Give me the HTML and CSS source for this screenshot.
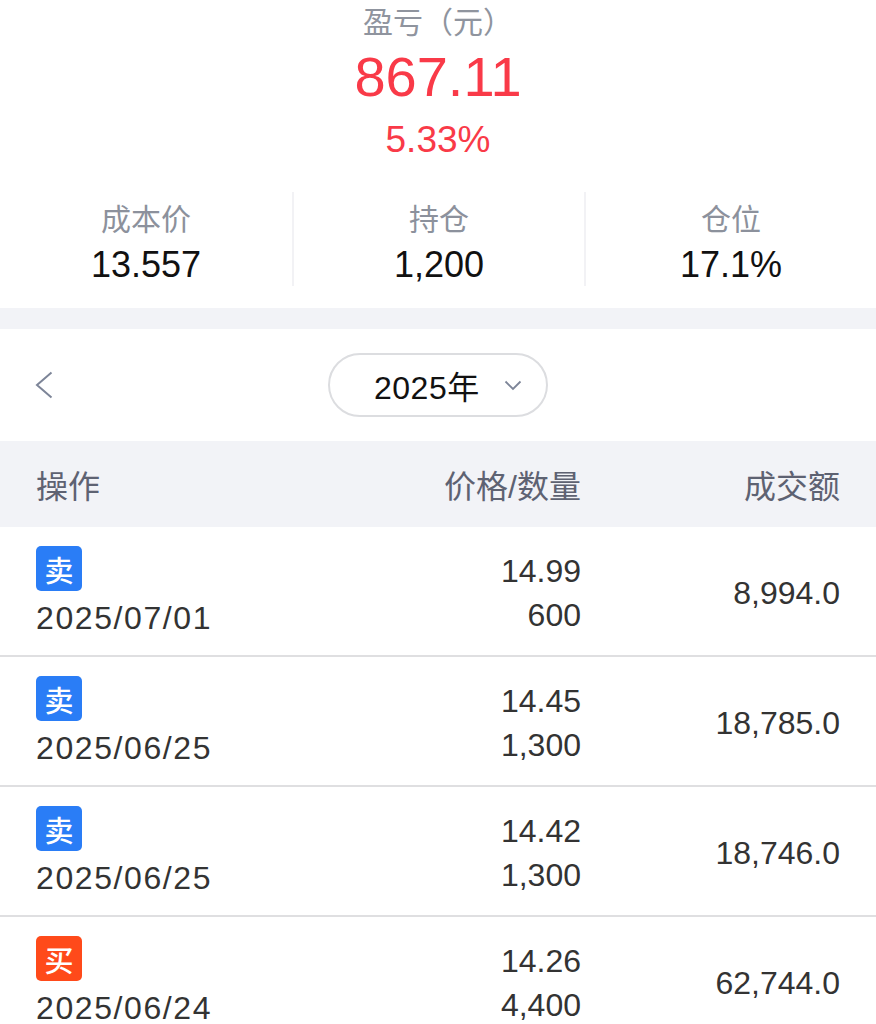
FILE: index.html
```html
<!DOCTYPE html>
<html>
	<head>
		<meta charset="UTF-8">
		<title>持仓详情</title>
		<link rel="stylesheet" href="styles.css">
	</head>
	<body>
		<div class="summary">
			<div class="pl-title">盈亏（元）</div>
			<div class="pl-value">867.11</div>
			<div class="pl-rate">5.33%</div>
		</div>
		<div class="stats">
			<div class="stat">
				<div class="stat-label">成本价</div>
				<div class="stat-value">13.557</div>
			</div>
			<div class="stat">
				<div class="stat-label">持仓</div>
				<div class="stat-value">1,200</div>
			</div>
			<div class="stat">
				<div class="stat-label">仓位</div>
				<div class="stat-value">17.1%</div>
			</div>
		</div>
		<div class="band"></div>
		<div class="year-bar">
			<div class="prev">
				<svg width="18" height="28" viewBox="0 0 18 28">
					<polyline points="16.5,1.5 2,14 16.5,26.5" fill="none" stroke="#7d8598" stroke-width="2"/>
				</svg>
			</div>
			<div class="year-pill">
				<span>2025年</span>
				<svg width="18" height="11" viewBox="0 0 18 11">
					<polyline points="1.5,1.5 9,9 16.5,1.5" fill="none" stroke="#7d8598" stroke-width="1.8"/>
				</svg>
			</div>
			<div></div>
		</div>
		<div class="table-head">
			<div>操作</div>
			<div class="num">价格/数量</div>
			<div class="num">成交额</div>
		</div>
		<div class="trade">
			<div class="op">
				<span class="tag sell">卖</span>
				<div class="date">2025/07/01</div>
			</div>
			<div class="num price">14.99<br>600</div>
			<div class="num amount">8,994.0</div>
		</div>
		<div class="trade">
			<div class="op">
				<span class="tag sell">卖</span>
				<div class="date">2025/06/25</div>
			</div>
			<div class="num price">14.45<br>1,300</div>
			<div class="num amount">18,785.0</div>
		</div>
		<div class="trade">
			<div class="op">
				<span class="tag sell">卖</span>
				<div class="date">2025/06/25</div>
			</div>
			<div class="num price">14.42<br>1,300</div>
			<div class="num amount">18,746.0</div>
		</div>
		<div class="trade">
			<div class="op">
				<span class="tag buy">买</span>
				<div class="date">2025/06/24</div>
			</div>
			<div class="num price">14.26<br>4,400</div>
			<div class="num amount">62,744.0</div>
		</div>
	</body>
</html>
```
FILE: styles.css
```css
* {
	margin: 0;
	padding: 0;
}
body {
	font-family: "Liberation Sans", "Noto Sans CJK SC", sans-serif;
	background-color: white;
	color: #333;
}
.summary {
	padding-top: 4px;
	text-align: center;
}
.pl-title {
	font-size: 30px;
	line-height: 38px;
	color: #8f949e;
}
.pl-value {
	font-size: 56px;
	line-height: 70px;
	color: #f93a48;
}
.pl-rate {
	margin-top: 3px;
	font-size: 37px;
	line-height: 50px;
	color: #f93a48;
}
.stats {
	display: grid;
	grid-template-columns: repeat(3, 1fr);
	margin-top: 27px;
	margin-bottom: 22px;
}
.stat {
	text-align: center;
	padding-top: 8px;
	border-left: 2px solid #f2f2f5;
}
.stat:first-child {
	border-left: none;
}
.stat-label {
	font-size: 30px;
	line-height: 40px;
	color: #8c919c;
}
.stat-value {
	margin-top: 3px;
	font-size: 36px;
	line-height: 43px;
	color: #111;
}
.band {
	height: 21px;
	background-color: #f2f3f7;
}
.year-bar {
	display: grid;
	grid-template-columns: 1fr auto 1fr;
	align-items: center;
	height: 112px;
}
.prev {
	padding-left: 35px;
	display: flex;
	align-items: center;
}
.year-pill {
	display: flex;
	align-items: center;
	box-sizing: border-box;
	height: 64px;
	width: 220px;
	padding: 0 24px 0 44px;
	border: 2px solid #dcdde0;
	border-radius: 32px;
	font-size: 32px;
	color: #111;
}
.year-pill span {
	letter-spacing: 0.5px;
}
.year-pill svg {
	margin-left: auto;
}
.table-head {
	display: grid;
	grid-template-columns: 1fr 200px 259px;
	align-items: center;
	height: 86px;
	padding: 0 36px;
	background-color: #f2f3f7;
	font-size: 32px;
	color: #5e6272;
}
.num {
	text-align: right;
}
.trade {
	display: grid;
	grid-template-columns: 1fr 200px 259px;
	align-items: center;
	padding: 19px 36px 15px;
	border-bottom: 2px solid #dfdfe1;
	font-size: 32px;
}
.tag {
	display: flex;
	align-items: center;
	justify-content: center;
	width: 46px;
	height: 45px;
	border-radius: 5px;
	font-size: 29px;
	font-weight: 500;
	color: white;
}
.sell {
	background-color: #2a7df6;
}
.buy {
	background-color: #ff4a1a;
}
.date {
	margin-top: 5px;
	line-height: 44px;
	letter-spacing: 1.6px;
}
.price {
	line-height: 44px;
}
```
